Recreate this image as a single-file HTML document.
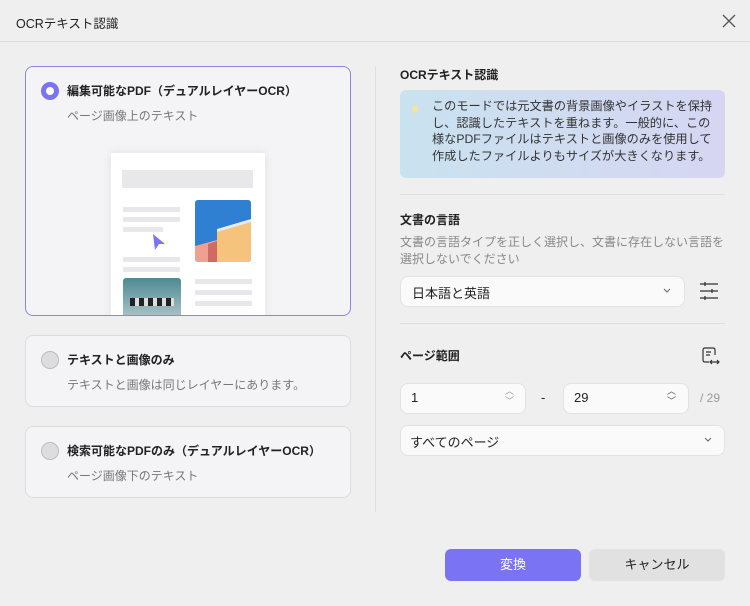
<!DOCTYPE html>
<html><head><meta charset="utf-8"><style>
*{box-sizing:border-box;margin:0;padding:0}
body{width:750px;height:606px;background:#efeff0;font-family:"Liberation Sans","Noto Sans CJK JP",sans-serif;color:#222;position:relative;overflow:hidden;font-size:13px}
.abs{position:absolute}
.card{position:absolute;left:25px;width:326px;border:1px solid #dcdcdc;border-radius:8px;background:#f4f4f6}
.radio{position:absolute;left:15px;width:18px;height:18px;border-radius:50%;border:1px solid #bbb;background:#ddd}
.t{position:absolute;left:41px;font-size:12px;font-weight:bold;color:#222}
.s{position:absolute;left:41px;font-size:12px;color:#777}
.h{font-size:12px;font-weight:bold}
.box{position:absolute;background:#fafafa;border:1px solid #e2e2e2;border-radius:8px}
.bar{position:absolute;background:#e8e8ea;border-radius:1px}
</style></head><body>
<div class="abs" style="left:16px;top:13px;font-size:12.5px;color:#222">OCRテキスト認識</div>
<svg class="abs" style="left:721px;top:13px" width="16" height="16"><path d="M2 2L14 14M14 2L2 14" stroke="#555" stroke-width="1.3"/></svg>
<div class="abs" style="left:0;top:41px;width:750px;height:1px;background:#dedede"></div>

<div class="card" style="top:66px;height:250px;border-color:#8c84e6;overflow:hidden">
 <div class="radio" style="top:15px;background:#fff;border:5px solid #7b74f0"></div>
 <div class="t" style="top:15px">編集可能なPDF（デュアルレイヤーOCR）</div>
 <div class="s" style="top:40px">ページ画像上のテキスト</div>
 <div class="abs" style="left:85px;top:86px;width:154px;height:170px;background:#fff;box-shadow:0 0 10px rgba(0,0,0,.08)">
  <div class="bar" style="left:11px;top:17px;width:131px;height:18px"></div>
  <div class="bar" style="left:12px;top:54px;width:57px;height:5px"></div>
  <div class="bar" style="left:12px;top:64px;width:57px;height:5px"></div>
  <div class="bar" style="left:12px;top:74px;width:40px;height:5px"></div>
  <div class="bar" style="left:12px;top:104px;width:57px;height:5px"></div>
  <div class="bar" style="left:12px;top:114px;width:57px;height:5px"></div>
  <svg class="abs" style="left:40px;top:80px" width="16" height="18"><path d="M2 1L14 11L8 11L4 17Z" fill="#7b74f0"/></svg>
  <div class="abs" style="left:84px;top:47px;width:56px;height:62px;border-radius:3px;overflow:hidden;background:#2f7fd2">
   <svg width="56" height="62"><path d="M22 30L56 20L56 62L22 62Z" fill="#f6c37c"/><path d="M0 46L22 40L22 62L0 62Z" fill="#f0a092"/><path d="M13 44L22 41L22 62L13 62Z" fill="#d06a62"/><path d="M22 29L56 19L56 22L22 32Z" fill="#e8eaf0"/></svg>
  </div>
  <div class="abs" style="left:12px;top:125px;width:58px;height:45px;border-radius:3px;background:linear-gradient(#4d8a92,#b8ccd0)">
   <div class="abs" style="left:7px;top:20px;width:44px;height:8px;background:repeating-linear-gradient(90deg,#222 0 5px,#ddd 5px 9px)"></div></div>
  <div class="bar" style="left:84px;top:126px;width:57px;height:5px"></div>
  <div class="bar" style="left:84px;top:137px;width:57px;height:5px"></div>
  <div class="bar" style="left:84px;top:148px;width:57px;height:5px"></div>
 </div>
</div>
<div class="card" style="top:335px;height:72px">
 <div class="radio" style="top:15px"></div>
 <div class="t" style="top:15px">テキストと画像のみ</div>
 <div class="s" style="top:40px">テキストと画像は同じレイヤーにあります。</div>
</div>
<div class="card" style="top:426px;height:72px">
 <div class="radio" style="top:15px"></div>
 <div class="t" style="top:15px">検索可能なPDFのみ（デュアルレイヤーOCR）</div>
 <div class="s" style="top:40px">ページ画像下のテキスト</div>
</div>
<div class="abs" style="left:375px;top:66px;width:1px;height:446px;background:#e0e0e0"></div>

<div class="abs h" style="left:400px;top:66px">OCRテキスト認識</div>
<div class="abs" style="left:400px;top:90px;width:325px;height:88px;border-radius:6px;background:linear-gradient(90deg,#c9e2ef,#d6d6f2)"></div>
<div class="abs" style="left:412px;top:105px;width:6px;height:8px;border-radius:50%;background:#f3e2a0"></div>
<div class="abs" style="left:432px;top:98px;width:285px;font-size:12.2px;line-height:16.5px;color:#333">このモードでは元文書の背景画像やイラストを保持し、認識したテキストを重ねます。一般的に、この様なPDFファイルはテキストと画像のみを使用して作成したファイルよりもサイズが大きくなります。</div>
<div class="abs" style="left:400px;top:194px;width:325px;height:1px;background:#e0e0e0"></div>
<div class="abs h" style="left:400px;top:211px">文書の言語</div>
<div class="abs" style="left:400px;top:234px;width:330px;font-size:12px;line-height:17px;color:#888">文書の言語タイプを正しく選択し、文書に存在しない言語を選択しないでください</div>
<div class="box" style="left:400px;top:276px;width:285px;height:31px"></div>
<div class="abs" style="left:412px;top:283px">日本語と英語</div>
<svg class="abs" style="left:663px;top:288px" width="8" height="6"><path d="M1 1L4 4L7 1" stroke="#666" fill="none"/></svg>
<svg class="abs" style="left:700px;top:281px" width="18" height="20"><path d="M0 3H18M0 10H18M0 17H18M5 1V5M12 8V12M5 15V19" stroke="#333" stroke-width="1.3"/></svg>
<div class="abs" style="left:400px;top:323px;width:325px;height:1px;background:#e0e0e0"></div>
<div class="abs h" style="left:400px;top:347px">ページ範囲</div>
<svg class="abs" style="left:701px;top:346px" width="19" height="20"><path d="M12 2H4Q2 2 2 4V14Q2 16 4 16H8M12 2Q14 2 14 4V9M5 6H10M5 9H9M9 16H18M11 14L9 16L11 18M16 14L18 16L16 18" stroke="#333" stroke-width="1.2" fill="none"/></svg>
<div class="box" style="left:400px;top:383px;width:126px;height:31px"></div>
<div class="abs" style="left:411px;top:390px">1</div>
<div class="abs" style="left:505px;top:386px;font-size:9px;color:#999;line-height:10px">︿<br>﹀</div>
<div class="abs" style="left:541px;top:390px">-</div>
<div class="box" style="left:563px;top:383px;width:126px;height:31px"></div>
<div class="abs" style="left:574px;top:390px">29</div>
<div class="abs" style="left:667px;top:386px;font-size:9px;color:#555;line-height:10px">︿<br>﹀</div>
<div class="abs" style="left:700px;top:391px;color:#999;font-size:12px">/ 29</div>
<div class="box" style="left:400px;top:425px;width:325px;height:31px"></div>
<div class="abs" style="left:410px;top:432px">すべてのページ</div>
<svg class="abs" style="left:704px;top:437px" width="8" height="6"><path d="M1 1L4 4L7 1" stroke="#666" fill="none"/></svg>

<div class="abs" style="left:445px;top:549px;width:136px;height:32px;border-radius:6px;background:#7a74f4;color:#fff;text-align:center;line-height:32px">変換</div>
<div class="abs" style="left:589px;top:549px;width:136px;height:32px;border-radius:6px;background:#e1e1e2;color:#222;text-align:center;line-height:32px">キャンセル</div>
</body></html>
